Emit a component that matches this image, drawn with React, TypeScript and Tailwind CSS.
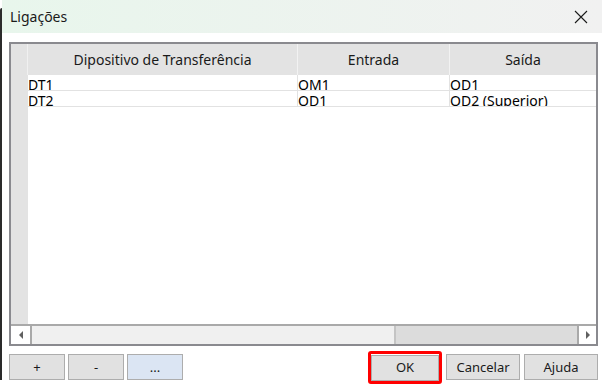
import React from "react";

const rows = [
  { dt: "DT1", entrada: "QM1", saida: "QD1" },
  { dt: "DT2", entrada: "QD1", saida: "QD2 (Superior)" },
];

function Btn({ label, blue }: { label: string; blue?: boolean }) {
  return (
    <button
      className={
        "h-[26px] w-[56px] border border-[#adadad] text-[13px] text-[#1a1a1a] " +
        (blue ? "bg-[#dbe5f3]" : "bg-[#e1e1e1]")
      }
    >
      {label}
    </button>
  );
}

export default function App() {
  return (
    <div
      className="w-[602px] h-[384px] bg-white flex overflow-hidden"
      style={{ fontFamily: '"Noto Sans", "Open Sans", sans-serif' }}
    >
      <div className="w-[2px] bg-[#2b2b2b] mt-[8px] mb-[4px] rounded-tl-[6px]" />
      <div className="flex-1 flex flex-col">
        {/* title bar */}
        <div className="h-[33px] flex items-center justify-between pl-[8px] pr-[12px] bg-gradient-to-r from-[#e8f6ec] to-[#f1f1f1]">
          <span className="text-[14px] text-[#1a1a1a]">Ligações</span>
          <svg width="16" height="16" viewBox="0 0 16 16" className="mr-[1px]">
            <path d="M2 2 L14 14 M14 2 L2 14" stroke="#1a1a1a" strokeWidth="1.1" />
          </svg>
        </div>

        <div className="flex-1 flex flex-col pl-[7px] pr-[4px] pt-[9px]">
          {/* grid */}
          <div className="h-[304px] border-2 border-[#8a8a8f] flex flex-col">
            <div className="flex-1 flex min-h-0">
              <div className="w-[17px] bg-[#e3e3e3] flex flex-col">
                <div className="h-[31px] border-r border-[#f0f0f0]" />
              </div>
              <div className="flex-1 flex flex-col">
                <div className="h-[31px] bg-[#e3e3e3] flex text-[14px] text-[#1a1a1a]">
                  <div className="w-[270px] flex items-center justify-center border-r border-[#f2f2f2]">
                    Dipositivo de Transferência
                  </div>
                  <div className="w-[152px] flex items-center justify-center border-r border-[#f2f2f2]">
                    Entrada
                  </div>
                  <div className="flex-1 flex items-center justify-center">Saída</div>
                </div>
                {rows.map((r) => (
                  <div
                    key={r.dt}
                    className="h-[16px] flex text-[14px] leading-[20px] text-black border-b border-[#e2e2e2] overflow-hidden"
                  >
                    <div className="w-[270px] border-r border-[#e2e2e2] overflow-hidden">{r.dt}</div>
                    <div className="w-[152px] border-r border-[#e2e2e2] overflow-hidden">{r.entrada}</div>
                    <div className="flex-1 overflow-hidden">{r.saida}</div>
                  </div>
                ))}
              </div>
            </div>
            {/* horizontal scrollbar */}
            <div className="h-[20px] flex border-t-2 border-[#a9a9a9] bg-[#f0f0f0]">
              <div className="w-[21px] bg-white border-r-2 border-[#a9a9a9] flex items-center justify-center">
                <svg width="6" height="8" viewBox="0 0 6 8">
                  <path d="M5 0 L1 4 L5 8 Z" fill="#606060" />
                </svg>
              </div>
              <div className="w-[362px]" />
              <div className="flex-1 bg-[#dcdcdc] border-l-2 border-[#c4c4c4]" />
              <div className="w-[19px] bg-white border-l-2 border-[#a9a9a9] flex items-center justify-center">
                <svg width="6" height="8" viewBox="0 0 6 8">
                  <path d="M1 0 L5 4 L1 8 Z" fill="#606060" />
                </svg>
              </div>
            </div>
          </div>

          {/* buttons */}
          <div className="flex items-center justify-between mt-[5px]">
            <div className="flex gap-[3px]">
              <Btn label="+" />
              <Btn label="-" />
              <Btn label="..." blue />
            </div>
            <div className="flex items-center gap-[4px]">
              <div className="border-[3px] border-[#ff0000] rounded-[3px] p-0">
                <button className="h-[26px] w-[68px] border border-[#adadad] bg-[#e1e1e1] text-[13px] text-[#1a1a1a]">
                  OK
                </button>
              </div>
              <button className="h-[26px] w-[74px] border border-[#adadad] bg-[#e1e1e1] text-[13px] text-[#1a1a1a]">
                Cancelar
              </button>
              <button className="h-[26px] w-[74px] border border-[#adadad] bg-[#e1e1e1] text-[13px] text-[#1a1a1a]">
                Ajuda
              </button>
            </div>
          </div>
        </div>
      </div>
    </div>
  );
}
